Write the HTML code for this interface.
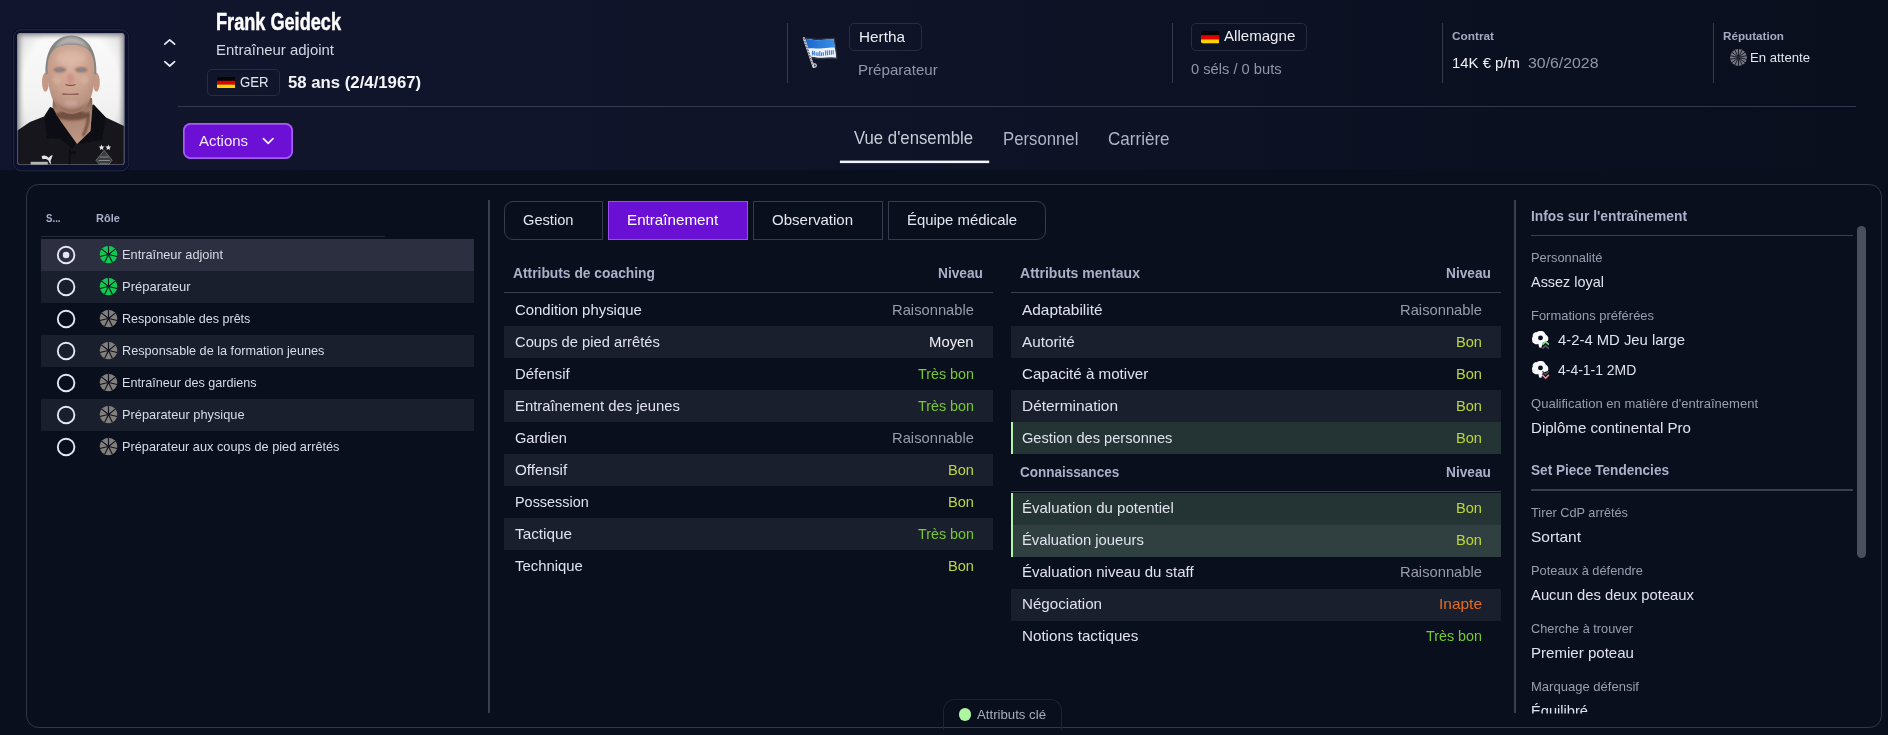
<!DOCTYPE html>
<html lang="fr"><head><meta charset="utf-8"><title>Frank Geideck</title>
<style>
html,body{margin:0;padding:0;background:#0a0f1e;}
body{width:1888px;height:735px;overflow:hidden;font-family:"Liberation Sans",sans-serif;}
#root{position:relative;width:1888px;height:735px;overflow:hidden;background:#0a0f1e;}
#root div,#root svg{position:absolute;box-sizing:border-box;}
.t{white-space:nowrap;line-height:20px;height:20px;}
.hdr{left:0;top:0;width:1888px;height:170px;background:linear-gradient(90deg,#11162e 0%,#0f1429 40%,#0b1021 80%,#0a0f1e 100%);}
.vd{width:1px;background:#363a4e;}
.chip{border:1px solid #272c41;border-radius:5px;}
.row{height:32px;}
.alt{background:#1a1f2e;}
.key{background:#243333;border-left:2px solid #b0f7a8;}
.key2{background:#304040;border-left:2px solid #b0f7a8;}
.hl{height:1px;background:#3a3f54;}
.tab{top:201px;height:39px;border:1px solid #363b50;background:#0a0f1e;}
#txt{left:0;top:0;width:1888px;height:735px;will-change:transform;}

</style></head>
<body>
<div id="root">
<div class="hdr"></div>
<!-- photo frame -->
<svg style="left:9px;top:25px" width="126" height="150" viewBox="9 25 126 150">
  <defs>
    <linearGradient id="pbg" x1="0" y1="0" x2="0" y2="1"><stop offset="0" stop-color="#fafafa"/><stop offset=".5" stop-color="#f3f3f3"/><stop offset="1" stop-color="#e2e2e2"/></linearGradient>
    <radialGradient id="skin" cx=".5" cy=".3" r=".8"><stop offset="0" stop-color="#d8b2a0"/><stop offset=".5" stop-color="#c9a18e"/><stop offset="1" stop-color="#a98272"/></radialGradient>
    <linearGradient id="neckg" x1="0" y1="0" x2="0" y2="1"><stop offset="0" stop-color="#7e5b4c"/><stop offset=".3" stop-color="#a98271"/><stop offset="1" stop-color="#c09985"/></linearGradient>
    <filter id="b05" x="-20%" y="-20%" width="140%" height="140%"><feGaussianBlur stdDeviation="0.55"/></filter>
    <filter id="b1" x="-20%" y="-20%" width="140%" height="140%"><feGaussianBlur stdDeviation="1.1"/></filter>
    <filter id="b2" x="-30%" y="-30%" width="160%" height="160%"><feGaussianBlur stdDeviation="2.2"/></filter>
    <radialGradient id="pvg" cx=".5" cy=".42" r=".72"><stop offset="0" stop-color="#888" stop-opacity="0"/><stop offset=".62" stop-color="#888" stop-opacity="0"/><stop offset="1" stop-color="#808080" stop-opacity=".42"/></radialGradient>
    <clipPath id="pc"><rect x="17.4" y="33.3" width="106.9" height="131.5" rx="2.6"/></clipPath>
  </defs>
  <rect x="12.6" y="28.9" width="117.1" height="143" rx="8.2" fill="none" stroke="#090c1c" stroke-width="1.4" opacity=".8"/><rect x="13.5" y="29.8" width="115.3" height="141" rx="7.5" fill="#0c1030" stroke="#252a3f" stroke-width="1"/>
  <g clip-path="url(#pc)">
    <rect x="17" y="33" width="108" height="132" fill="url(#pbg)"/>
    <rect x="17" y="33" width="108" height="132" fill="url(#pvg)"/>
    <rect x="15.4" y="31.3" width="110.9" height="135.5" rx="4" fill="none" stroke="#777" stroke-width="9" filter="url(#b2)" opacity=".75"/>
    <!-- shirt -->
    <path d="M16 131.5 L30 122 L44 116.5 L50 107 L70 114 L93.5 104.5 L106 117.5 L125 126.5 L126 166 L16 166 Z" fill="#15191a" filter="url(#b05)"/>
    <!-- neck -->
    <path d="M53 100 L92 98 L92.5 106 L90.5 131 L76.7 144.5 L64 128 L52.5 107 Z" fill="url(#neckg)" filter="url(#b05)"/>
    <path d="M88.5 112 C89 122 86 130 83 136" stroke="#4e362c" stroke-width="2.2" fill="none" filter="url(#b1)" opacity=".85"/>
    <ellipse cx="72" cy="115.5" rx="17" ry="5" fill="#684637" opacity=".85" filter="url(#b1)"/>
    <!-- collar -->
    <path d="M44.5 117.5 L50.5 107 L77 144 L72 149 L60 138 L47 139 Z" fill="#0e1112" filter="url(#b05)"/>
    <path d="M93.5 104.5 L106 118 L102 140 L84 143 L77 144.5 L91 131 Z" fill="#0e1112" filter="url(#b05)"/>
    <!-- ears -->
    <ellipse cx="45.4" cy="82.3" rx="3.4" ry="9.5" fill="#c49884" filter="url(#b05)"/>
    <ellipse cx="96.4" cy="82.3" rx="3.4" ry="9.5" fill="#c49884" filter="url(#b05)"/>
    <!-- hair back layer (sides + top) -->
    <path d="M45.6 74.5 C44.4 50 55 35.4 71.5 35.4 C87 35.4 97.5 50 96.4 74.5 L94 74.5 C94 66 92 58 90 54 C86 47 79 45.5 71 45.5 C63 45.5 56 47 52 54 C50 58 48 66 48 74.5 Z" fill="#858382" filter="url(#b05)"/>
    <!-- head -->
    <path d="M47.6 72 C47 55 52 44.8 71 44.8 C90 44.8 95 55 94.4 72 C94.4 84 93 95 88.5 103 C85 109.5 78.5 113.8 71.5 113.8 C64.5 113.8 58.5 109.5 54.5 103 C50 95 47.8 84 47.6 72 Z" fill="url(#skin)" filter="url(#b05)"/>
    <!-- light gray hair top -->
    <path d="M54 50 C58 41 64 37.2 71.5 37.2 C79 37.2 85 41 89 50 C84 44.6 78 43.6 71.5 43.6 C65 43.6 59 44.6 54 50 Z" fill="#b3b1b0" filter="url(#b1)"/>
    <ellipse cx="71" cy="58" rx="15" ry="7" fill="#e4c0af" opacity=".55" filter="url(#b2)"/>
    <!-- brows/eyes -->
    <ellipse cx="59.8" cy="69.8" rx="6.5" ry="2.7" fill="#8a685d" opacity=".75" filter="url(#b1)"/>
    <ellipse cx="81.2" cy="69.8" rx="6.5" ry="2.7" fill="#8a685d" opacity=".75" filter="url(#b1)"/>
    <ellipse cx="59.3" cy="70.7" rx="2.3" ry="1.3" fill="#6f8fa8" filter="url(#b05)"/>
    <ellipse cx="81.3" cy="70.7" rx="2.3" ry="1.3" fill="#6f8fa8" filter="url(#b05)"/>
    <!-- cheeks -->
    <ellipse cx="57" cy="80" rx="4.5" ry="4" fill="#dcb5a6" opacity=".5" filter="url(#b1)"/>
    <ellipse cx="84" cy="80" rx="4.5" ry="4" fill="#dcb5a6" opacity=".5" filter="url(#b1)"/>
    <!-- nose -->
    <ellipse cx="70.5" cy="79" rx="3.8" ry="6" fill="#cf8c82" opacity=".75" filter="url(#b1)"/>
    <path d="M65.5 84.5 Q70.5 86.6 75.5 84.5" stroke="#76503f" stroke-width="1.3" fill="none" filter="url(#b05)"/>
    <!-- mouth -->
    <path d="M62.5 94 Q70.5 95.6 78.5 94" stroke="#94615a" stroke-width="1.9" fill="none" filter="url(#b05)"/>
    <!-- jaw shading -->
    <path d="M52 96 C56 108 64 113.5 71.5 113.5 C79 113.5 87 108 91 96 C88 104 80 109 71.5 109 C63 109 56 104 52 96 Z" fill="#8b6656" opacity=".7" filter="url(#b1)"/>
    <ellipse cx="71" cy="103" rx="6.5" ry="3" fill="#d0aca4" opacity=".55" filter="url(#b1)"/>
    <!-- placket & button -->
    <path d="M70 149 L69.5 166" stroke="#0a0c0d" stroke-width="1.6"/>
    <ellipse cx="73.5" cy="152.5" rx="2.4" ry="1.3" fill="#0a0c0d"/>
    <!-- stars -->
    <g fill="#e6e6e6"><path id="st" d="M101.6 144.5 l0.85 1.9 2.05 .2 -1.55 1.4 .45 2 -1.8 -1.05 -1.8 1.05 .45 -2 -1.55 -1.4 2.05 -.2z"/><use href="#st" x="6.7"/></g>
    <!-- diamond badge -->
    <path d="M104.2 150.3 L112.2 160.3 L104.2 170 L96 160.3 Z" fill="#3b3f40" stroke="#6f7374" stroke-width=".9"/>
    <path d="M100 157 H108.5 M98.5 160.5 H110 M100 164 H108.5" stroke="#858989" stroke-width="1.1"/>
    <!-- puma -->
    <path d="M41.6 156.3 C43.5 154.8 46.5 155.5 48.5 157.8 C50 156.5 51 155.5 52.5 154.8 C52.3 157.5 51 159.5 50.5 161 L51.2 163.8 L49.8 163.5 L48.3 160.2 C46.5 158.5 44 158.8 42.5 159.3 Z" fill="#e4e4e4"/>
    <rect x="30.6" y="161.8" width="17.2" height="3.4" fill="#b4b4b4"/>
    <rect x="17.6" y="33.5" width="106.5" height="131.1" rx="2.6" fill="none" stroke="#7f828c" stroke-width=".7" opacity=".8"/>
  </g>
</svg>
<!-- arrows -->
<svg style="left:160px;top:34px" width="20" height="38" viewBox="160 34 20 38" fill="none" stroke="#eceef6" stroke-width="1.7" stroke-linecap="round" stroke-linejoin="round"><path d="M164.8 44.2 L169.7 39.9 L174.6 44.2"/><path d="M164.8 61.7 L169.7 66 L174.6 61.7"/></svg>
<!-- GER chip -->
<div class="chip" style="left:207px;top:69px;width:73px;height:27px"></div>
<svg style="left:216.9px;top:76.9px" width="18.4" height="11.4" viewBox="0 0 18.4 11.4"><clipPath id="fc217"><rect width="18.4" height="11.4" rx="1.6"/></clipPath><g clip-path="url(#fc217)"><rect width="18.4" height="3.9" fill="#050505"/><rect y="3.8" width="18.4" height="3.9" fill="#e10000"/><rect y="7.6" width="18.4" height="3.8" fill="#ffd200"/></g></svg>
<!-- header rule -->
<div class="hl" style="left:178px;top:106px;width:1678px;background:#343950"></div>
<!-- actions btn -->
<div style="left:183px;top:123px;width:110px;height:36px;border-radius:7.5px;background:#6c10d6;box-shadow:inset 0 0 0 1.7px #a560f0"></div>
<svg style="left:260px;top:134px" width="16" height="14" viewBox="260 134 16 14" fill="none" stroke="#f6efff" stroke-width="1.7" stroke-linecap="round" stroke-linejoin="round"><path d="M263.4 138.6 L268.2 143.4 L273 138.6"/></svg>
<!-- header dividers -->
<div class="vd" style="left:787px;top:23px;height:60px"></div>
<div class="vd" style="left:1172px;top:23px;height:60px"></div>
<div class="vd" style="left:1442px;top:23px;height:60px"></div>
<div class="vd" style="left:1713px;top:23px;height:60px"></div>
<!-- hertha logo -->
<svg style="left:798px;top:32px" width="44" height="42" viewBox="798 32 44 42">
  <defs><linearGradient id="hb" x1="0" y1="0" x2="1" y2="0"><stop offset="0" stop-color="#1866d0"/><stop offset="1" stop-color="#3a90e8"/></linearGradient></defs>
  <path d="M803.6 38.3 C809 37.6 812 39.6 818 39.4 C824 39.2 829 38.2 834.3 38.5 L836.9 58.4 C831 57.2 826 58.6 820 58.6 C816 58.6 813.5 57.2 810.6 57.6 Z" fill="#f2f5fa" stroke="#30343c" stroke-width="1.5" stroke-linejoin="round"/>
  <path d="M804.6 39.1 C809 38.6 812 40.4 818 40.2 C824 40 829 39.1 833.6 39.3 L834.9 47.8 C830 47 825 48.6 820 48.6 C815 48.6 812 47.6 807.6 48.6 Z" fill="url(#hb)"/>
  <path d="M808 49.4 C812 48.6 815 49.6 820 49.6 C825 49.6 830 48 835 48.8 L835.9 56.4 C831 55.6 826 57 820 57 C816 57 813.5 55.8 810.6 56.2 Z" fill="#eef3fb"/>
  <g stroke="#3d7fd6" stroke-width="1.1" fill="none"><path d="M812.5 50.8 V55.4 M814.3 51 V55.6 M812.5 53.2 H814.3 M816.2 52.2 V55.8 M818 52.2 V55.9 M819.8 51 V55.9 M821.6 52.3 V56 M823.4 52.2 V55.8 M825.6 50.6 V55.5 M827.4 50.4 V55.3 M829.4 50.2 V55 M831.4 50.2 V54.8 M833.2 50 V54.6"/></g>
  <path d="M803.8 38.2 L813.6 66.8" stroke="#d8dade" stroke-width="2.1" stroke-linecap="round"/>
  <path d="M803.8 38.2 L813.6 66.8" stroke="#2a2c33" stroke-width="1" stroke-dasharray="1.6 1.4"/>
  <circle cx="814.6" cy="65.6" r="1.7" fill="none" stroke="#d8dade" stroke-width="1.1"/>
</svg>
<div class="chip" style="left:849px;top:23px;width:73px;height:28px"></div>
<!-- allemagne chip -->
<div class="chip" style="left:1191px;top:23px;width:116px;height:28px"></div>
<svg style="left:1200.9px;top:31.3px" width="18.4" height="12.6" viewBox="0 0 18.4 12.6"><clipPath id="fc1201"><rect width="18.4" height="12.6" rx="2.4"/></clipPath><g clip-path="url(#fc1201)"><rect width="18.4" height="4.3" fill="#050505"/><rect y="4.2" width="18.4" height="4.3" fill="#e10000"/><rect y="8.4" width="18.4" height="4.2" fill="#ffd200"/></g></svg>
<!-- reputation icon -->
<svg style="left:1729.9px;top:49px" width="17" height="17" viewBox="-8.5 -8.5 17 17"><circle r="8.4" fill="#77787a"/><g stroke="#0e1224" stroke-width="0.9"><path d="M0 0 L0.00 -8.57"/><path d="M0 0 L3.72 -7.72"/><path d="M0 0 L6.70 -5.34"/><path d="M0 0 L8.35 -1.91"/><path d="M0 0 L8.35 1.91"/><path d="M0 0 L6.70 5.34"/><path d="M0 0 L3.72 7.72"/><path d="M0 0 L0.00 8.57"/><path d="M0 0 L-3.72 7.72"/><path d="M0 0 L-6.70 5.34"/><path d="M0 0 L-8.35 1.91"/><path d="M0 0 L-8.35 -1.91"/><path d="M0 0 L-6.70 -5.34"/><path d="M0 0 L-3.72 -7.72"/></g><circle r="1.6" fill="#23263a"/></svg>
<!-- tabs underline -->
<svg style="left:836px;top:158px" width="158" height="8" viewBox="836 158 158 8"><rect x="839.9" y="160.6" width="149.3" height="2.5" fill="#f4f5fa"/></svg>

<!-- main panel -->
<div style="left:26px;top:184px;width:1856px;height:544px;border:1px solid #32364a;border-radius:12.5px;background:#0a0f1e"></div>
<!-- left table -->
<div class="hl" style="left:41px;top:236px;width:344px;background:#242839"></div>
<div class="row" style="left:41px;top:239px;width:433px;background:#2b2f3f"></div>
<div class="row alt" style="left:41px;top:271px;width:433px"></div>
<div class="row alt" style="left:41px;top:335px;width:433px"></div>
<div class="row alt" style="left:41px;top:399px;width:433px"></div>
<svg style="left:0;top:0" width="500" height="480" viewBox="0 0 500 480">
  <defs>
    <g id="wheelg"><circle r="8.8" fill="#807f7c"/><g stroke="#10131f" stroke-width="1.15"><path d="M0 0 L0.00 -8.98"/><path d="M0 0 L7.02 -5.60"/><path d="M0 0 L8.75 2.00"/><path d="M0 0 L3.89 8.09"/><path d="M0 0 L-3.89 8.09"/><path d="M0 0 L-8.75 2.00"/><path d="M0 0 L-7.02 -5.60"/></g><circle r="1.1" fill="#10131f"/></g>
    <g id="wheelgr"><circle r="8.8" fill="#10ca54"/><g stroke="#111a22" stroke-width="1.15"><path d="M0 0 L0.00 -8.98"/><path d="M0 0 L7.02 -5.60"/><path d="M0 0 L8.75 2.00"/><path d="M0 0 L3.89 8.09"/><path d="M0 0 L-3.89 8.09"/><path d="M0 0 L-8.75 2.00"/><path d="M0 0 L-7.02 -5.60"/></g><circle r="1.1" fill="#111a22"/></g>
  </defs>
  <g fill="none" stroke="#e6e4f5" stroke-width="1.9">
    <circle cx="66.1" cy="255" r="8.3"/><circle cx="66.1" cy="287" r="8.3"/><circle cx="66.1" cy="319" r="8.3"/><circle cx="66.1" cy="351" r="8.3"/><circle cx="66.1" cy="383" r="8.3"/><circle cx="66.1" cy="415" r="8.3"/><circle cx="66.1" cy="447" r="8.3"/>
  </g>
  <circle cx="66.1" cy="255" r="3.3" fill="#e6e4f5"/>
  <use href="#wheelgr" x="108.5" y="254.5"/><use href="#wheelgr" x="108.5" y="286.5"/>
  <use href="#wheelg" x="108.5" y="318.5"/><use href="#wheelg" x="108.5" y="350.5"/><use href="#wheelg" x="108.5" y="382.5"/><use href="#wheelg" x="108.5" y="414.5"/><use href="#wheelg" x="108.5" y="446.5"/>
</svg>
<!-- vertical dividers -->
<div style="left:488px;top:200px;width:2px;height:513px;background:#3a3e50"></div>
<div style="left:1514px;top:200px;width:2px;height:513px;background:#3a3e50"></div>
<!-- tabs -->
<div class="tab" style="left:504px;width:99px;border-radius:9px 0 0 9px"></div>
<div class="tab" style="left:608px;width:140px;background:#6a10d4;border-color:#9a4cf0"></div>
<div class="tab" style="left:753px;width:130px"></div>
<div class="tab" style="left:888px;width:158px;border-radius:0 9px 9px 0"></div>
<!-- coaching rows -->
<div class="hl" style="left:504px;top:292px;width:489px"></div>
<div class="row alt" style="left:504px;top:326px;width:489px"></div>
<div class="row alt" style="left:504px;top:390px;width:489px"></div>
<div class="row alt" style="left:504px;top:454px;width:489px"></div>
<div class="row alt" style="left:504px;top:518px;width:489px"></div>
<!-- mental rows -->
<div class="hl" style="left:1011px;top:292px;width:490px"></div>
<div class="row alt" style="left:1011px;top:326px;width:490px"></div>
<div class="row alt" style="left:1011px;top:390px;width:490px"></div>
<div class="row key" style="left:1011px;top:422px;width:490px"></div>
<div class="hl" style="left:1011px;top:491px;width:490px"></div>
<div class="row key" style="left:1011px;top:493px;width:490px"></div>
<div class="row key2" style="left:1011px;top:525px;width:490px"></div>
<div class="row alt" style="left:1011px;top:589px;width:490px"></div>
<!-- right panel -->
<div class="hl" style="left:1531px;top:235px;width:322px"></div>
<div class="hl" style="left:1531px;top:489px;width:322px;height:2px"></div>
<div style="left:1857px;top:226px;width:9px;height:332px;border-radius:4.5px;background:#4b4f5b"></div>
<svg style="left:1530px;top:329px" width="22" height="52" viewBox="1530 329 22 52">
  <g id="fi"><path d="M1533.5 333.6 C1534.5 331.8 1536.2 332.2 1537 331.9 C1538.5 330.6 1541.5 330.8 1542.7 331.2 C1544.5 331.6 1545 333.4 1545.7 334.5 C1547.5 335.6 1548.6 337.6 1548.3 338.8 C1548.4 340.5 1547.6 341.2 1546 341.6 L1542.7 342.7 C1542.2 344.5 1541.8 346.5 1541.4 347.7 L1539.2 347.6 C1539 346.3 1538.6 345 1538.3 344 C1536.5 344.6 1534.6 344.2 1534.2 343.5 C1532.8 343 1531.9 341.6 1532.3 340.4 C1531.6 338.8 1532.2 337.4 1532.8 336.4 C1532.5 335.3 1532.8 334.3 1533.5 333.6 Z" fill="#fafafc"/><circle cx="1540.5" cy="337.9" r="2.45" fill="#0a0f1e"/></g>
  <path d="M1542.4 344.6 L1545.6 341.6 L1548.8 344.6" fill="none" stroke="#8ee88f" stroke-width="1.5"/>
  <path d="M1542.4 348.6 L1545.6 345.6 L1548.8 348.6" fill="none" stroke="#50535f" stroke-width="1.5"/>
  <use href="#fi" y="30"/>
  <path d="M1542.4 371.2 L1545.6 374.2 L1548.8 371.2" fill="none" stroke="#50535f" stroke-width="1.5"/>
  <path d="M1542.4 374.9 L1545.6 378.2 L1548.8 374.9" fill="none" stroke="#f28b8b" stroke-width="1.6"/>
</svg>
<div style="left:1520px;top:713px;width:330px;height:14px;background:#0a0f1e"></div>
<!-- key attr tab -->
<div style="left:943px;top:699px;width:119px;height:31px;border:1px solid #1d2236;border-bottom:none;border-radius:12px 12px 0 0;"></div>
<div style="left:958.8px;top:708.2px;width:12.4px;height:12.4px;border-radius:6.2px;background:#aef5a1"></div>

<div id="txt">
<div class="t" style="font-size:24px;color:#ffffff;font-weight:700;left:215.70px;top:12px;transform:scaleX(0.7556);transform-origin:0 0;-webkit-text-stroke:0.45px #fff;">Frank Geideck</div>
<div class="t" style="font-size:15.52px;color:#d4d7e2;left:216.40px;top:40px;transform:scaleX(0.9634);transform-origin:0 0;">Entraîneur adjoint</div>
<div class="t" style="font-size:15.52px;color:#e4e6ee;left:240.00px;top:72px;transform:scaleX(0.8506);transform-origin:0 0;">GER</div>
<div class="t" style="font-size:15.6px;color:#f4f5f9;font-weight:700;left:288.30px;top:73px;transform:scaleX(1.0737);transform-origin:0 0;">58 ans (2/4/1967)</div>
<div class="t" style="font-size:15.52px;color:#f3eaff;left:198.60px;top:131px;transform:scaleX(0.9628);transform-origin:0 0;">Actions</div>
<div class="t" style="font-size:15.52px;color:#eceef4;left:859.10px;top:27px;transform:scaleX(0.9876);transform-origin:0 0;">Hertha</div>
<div class="t" style="font-size:15.52px;color:#9296a8;left:858.40px;top:60px;transform:scaleX(0.9739);transform-origin:0 0;">Préparateur</div>
<div class="t" style="font-size:15.52px;color:#eceef4;left:1224.00px;top:26px;transform:scaleX(0.9723);transform-origin:0 0;">Allemagne</div>
<div class="t" style="font-size:15.52px;color:#9296a8;left:1191.30px;top:59px;transform:scaleX(0.9464);transform-origin:0 0;">0 séls / 0 buts</div>
<div class="t" style="font-size:11px;color:#a6a9c2;font-weight:700;left:1451.60px;top:26px;transform:scaleX(1.0739);transform-origin:0 0;">Contrat</div>
<div class="t" style="font-size:15.52px;color:#f0f1f6;left:1452.00px;top:53px;transform:scaleX(0.9599);transform-origin:0 0;">14K € p/m</div>
<div class="t" style="font-size:15.52px;color:#9296a8;left:1527.50px;top:53px;transform:scaleX(1.0213);transform-origin:0 0;">30/6/2028</div>
<div class="t" style="font-size:11px;color:#a6a9c2;font-weight:700;left:1722.60px;top:26px;transform:scaleX(1.0617);transform-origin:0 0;">Réputation</div>
<div class="t" style="font-size:13.45px;color:#e4e6ee;left:1749.60px;top:48px;transform:scaleX(0.9793);transform-origin:0 0;">En attente</div>
<div class="t" style="font-size:17.59px;color:#c9ccd8;left:854.00px;top:128px;transform:scaleX(0.9531);transform-origin:0 0;">Vue d'ensemble</div>
<div class="t" style="font-size:17.59px;color:#b0b4c4;left:1003.10px;top:129px;transform:scaleX(0.9525);transform-origin:0 0;">Personnel</div>
<div class="t" style="font-size:17.59px;color:#b0b4c4;left:1108.00px;top:129px;transform:scaleX(0.9701);transform-origin:0 0;">Carrière</div>
<div class="t" style="font-size:11px;color:#adb0c8;font-weight:700;left:45.50px;top:208px;transform:scaleX(0.8780);transform-origin:0 0;">S...</div>
<div class="t" style="font-size:11px;color:#adb0c8;font-weight:700;left:95.70px;top:208px;transform:scaleX(0.9982);transform-origin:0 0;">Rôle</div>
<div class="t" style="font-size:13.45px;color:#d9dce8;left:122.40px;top:245px;transform:scaleX(0.9521);transform-origin:0 0;">Entraîneur adjoint</div>
<div class="t" style="font-size:13.45px;color:#d9dce8;left:122.40px;top:277px;transform:scaleX(0.9666);transform-origin:0 0;">Préparateur</div>
<div class="t" style="font-size:13.45px;color:#d9dce8;left:122.40px;top:309px;transform:scaleX(0.9341);transform-origin:0 0;">Responsable des prêts</div>
<div class="t" style="font-size:13.45px;color:#d9dce8;left:122.40px;top:341px;transform:scaleX(0.9441);transform-origin:0 0;">Responsable de la formation jeunes</div>
<div class="t" style="font-size:13.45px;color:#d9dce8;left:122.40px;top:373px;transform:scaleX(0.9384);transform-origin:0 0;">Entraîneur des gardiens</div>
<div class="t" style="font-size:13.45px;color:#d9dce8;left:122.40px;top:405px;transform:scaleX(0.9542);transform-origin:0 0;">Préparateur physique</div>
<div class="t" style="font-size:13.45px;color:#d9dce8;left:122.40px;top:437px;transform:scaleX(0.9484);transform-origin:0 0;">Préparateur aux coups de pied arrêtés</div>
<div class="t" style="font-size:15.52px;color:#e4e6ee;left:522.80px;top:210px;transform:scaleX(0.9442);transform-origin:0 0;">Gestion</div>
<div class="t" style="font-size:15.52px;color:#ffffff;left:627.30px;top:210px;transform:scaleX(0.9790);transform-origin:0 0;">Entraînement</div>
<div class="t" style="font-size:15.52px;color:#e4e6ee;left:772.00px;top:210px;transform:scaleX(0.9694);transform-origin:0 0;">Observation</div>
<div class="t" style="font-size:15.52px;color:#e4e6ee;left:907.00px;top:210px;transform:scaleX(0.9597);transform-origin:0 0;">Équipe médicale</div>
<div class="t" style="font-size:14px;color:#adb0c8;font-weight:700;left:512.60px;top:263px;transform:scaleX(0.9868);transform-origin:0 0;">Attributs de coaching</div>
<div class="t" style="font-size:14px;color:#adb0c8;font-weight:700;left:938.00px;top:263px;transform:scaleX(0.9799);transform-origin:0 0;">Niveau</div>
<div class="t" style="font-size:15.52px;color:#e0e2ed;left:515.00px;top:300px;transform:scaleX(0.9607);transform-origin:0 0;">Condition physique</div>
<div class="t" style="font-size:15.52px;color:#999ba8;left:892.00px;top:300px;transform:scaleX(0.9506);transform-origin:0 0;">Raisonnable</div>
<div class="t" style="font-size:15.52px;color:#e0e2ed;left:515.00px;top:332px;transform:scaleX(0.9484);transform-origin:0 0;">Coups de pied arrêtés</div>
<div class="t" style="font-size:15.52px;color:#f0f1f5;left:929.40px;top:332px;transform:scaleX(0.9575);transform-origin:0 0;">Moyen</div>
<div class="t" style="font-size:15.52px;color:#e0e2ed;left:515.00px;top:364px;transform:scaleX(0.9592);transform-origin:0 0;">Défensif</div>
<div class="t" style="font-size:15.52px;color:#78c82f;left:918.00px;top:364px;transform:scaleX(0.9232);transform-origin:0 0;">Très bon</div>
<div class="t" style="font-size:15.52px;color:#e0e2ed;left:515.00px;top:396px;transform:scaleX(0.9559);transform-origin:0 0;">Entraînement des jeunes</div>
<div class="t" style="font-size:15.52px;color:#78c82f;left:918.00px;top:396px;transform:scaleX(0.9232);transform-origin:0 0;">Très bon</div>
<div class="t" style="font-size:15.52px;color:#e0e2ed;left:515.00px;top:428px;transform:scaleX(0.9420);transform-origin:0 0;">Gardien</div>
<div class="t" style="font-size:15.52px;color:#999ba8;left:892.00px;top:428px;transform:scaleX(0.9506);transform-origin:0 0;">Raisonnable</div>
<div class="t" style="font-size:15.52px;color:#e0e2ed;left:515.00px;top:460px;transform:scaleX(0.9814);transform-origin:0 0;">Offensif</div>
<div class="t" style="font-size:15.52px;color:#bcd733;left:948.00px;top:460px;transform:scaleX(0.9417);transform-origin:0 0;">Bon</div>
<div class="t" style="font-size:15.52px;color:#e0e2ed;left:515.00px;top:492px;transform:scaleX(0.9289);transform-origin:0 0;">Possession</div>
<div class="t" style="font-size:15.52px;color:#bcd733;left:948.00px;top:492px;transform:scaleX(0.9417);transform-origin:0 0;">Bon</div>
<div class="t" style="font-size:15.52px;color:#e0e2ed;left:515.00px;top:524px;transform:scaleX(0.9862);transform-origin:0 0;">Tactique</div>
<div class="t" style="font-size:15.52px;color:#78c82f;left:918.00px;top:524px;transform:scaleX(0.9232);transform-origin:0 0;">Très bon</div>
<div class="t" style="font-size:15.52px;color:#e0e2ed;left:515.00px;top:556px;transform:scaleX(0.9583);transform-origin:0 0;">Technique</div>
<div class="t" style="font-size:15.52px;color:#bcd733;left:948.00px;top:556px;transform:scaleX(0.9417);transform-origin:0 0;">Bon</div>
<div class="t" style="font-size:14px;color:#adb0c8;font-weight:700;left:1019.60px;top:263px;transform:scaleX(1.0017);transform-origin:0 0;">Attributs mentaux</div>
<div class="t" style="font-size:14px;color:#adb0c8;font-weight:700;left:1446.00px;top:263px;transform:scaleX(0.9799);transform-origin:0 0;">Niveau</div>
<div class="t" style="font-size:15.52px;color:#e0e2ed;left:1022.00px;top:300px;transform:scaleX(0.9927);transform-origin:0 0;">Adaptabilité</div>
<div class="t" style="font-size:15.52px;color:#999ba8;left:1400.00px;top:300px;transform:scaleX(0.9506);transform-origin:0 0;">Raisonnable</div>
<div class="t" style="font-size:15.52px;color:#e0e2ed;left:1022.00px;top:332px;transform:scaleX(0.9872);transform-origin:0 0;">Autorité</div>
<div class="t" style="font-size:15.52px;color:#bcd733;left:1456.00px;top:332px;transform:scaleX(0.9417);transform-origin:0 0;">Bon</div>
<div class="t" style="font-size:15.52px;color:#e0e2ed;left:1022.00px;top:364px;transform:scaleX(0.9756);transform-origin:0 0;">Capacité à motiver</div>
<div class="t" style="font-size:15.52px;color:#bcd733;left:1456.00px;top:364px;transform:scaleX(0.9417);transform-origin:0 0;">Bon</div>
<div class="t" style="font-size:15.52px;color:#e0e2ed;left:1022.00px;top:396px;transform:scaleX(0.9939);transform-origin:0 0;">Détermination</div>
<div class="t" style="font-size:15.52px;color:#bcd733;left:1456.00px;top:396px;transform:scaleX(0.9417);transform-origin:0 0;">Bon</div>
<div class="t" style="font-size:15.52px;color:#e0e2ed;left:1022.00px;top:428px;transform:scaleX(0.9425);transform-origin:0 0;">Gestion des personnes</div>
<div class="t" style="font-size:15.52px;color:#bcd733;left:1456.00px;top:428px;transform:scaleX(0.9417);transform-origin:0 0;">Bon</div>
<div class="t" style="font-size:14px;color:#adb0c8;font-weight:700;left:1019.60px;top:462px;transform:scaleX(0.9657);transform-origin:0 0;">Connaissances</div>
<div class="t" style="font-size:14px;color:#adb0c8;font-weight:700;left:1446.00px;top:462px;transform:scaleX(0.9799);transform-origin:0 0;">Niveau</div>
<div class="t" style="font-size:15.52px;color:#e0e2ed;left:1022.00px;top:498px;transform:scaleX(0.9669);transform-origin:0 0;">Évaluation du potentiel</div>
<div class="t" style="font-size:15.52px;color:#bcd733;left:1456.00px;top:498px;transform:scaleX(0.9417);transform-origin:0 0;">Bon</div>
<div class="t" style="font-size:15.52px;color:#e0e2ed;left:1022.00px;top:530px;transform:scaleX(0.9541);transform-origin:0 0;">Évaluation joueurs</div>
<div class="t" style="font-size:15.52px;color:#bcd733;left:1456.00px;top:530px;transform:scaleX(0.9417);transform-origin:0 0;">Bon</div>
<div class="t" style="font-size:15.52px;color:#e0e2ed;left:1022.00px;top:562px;transform:scaleX(0.9672);transform-origin:0 0;">Évaluation niveau du staff</div>
<div class="t" style="font-size:15.52px;color:#999ba8;left:1400.00px;top:562px;transform:scaleX(0.9506);transform-origin:0 0;">Raisonnable</div>
<div class="t" style="font-size:15.52px;color:#e0e2ed;left:1022.00px;top:594px;transform:scaleX(0.9762);transform-origin:0 0;">Négociation</div>
<div class="t" style="font-size:15.52px;color:#e36c22;left:1439.00px;top:594px;transform:scaleX(0.9967);transform-origin:0 0;">Inapte</div>
<div class="t" style="font-size:15.52px;color:#e0e2ed;left:1022.00px;top:626px;transform:scaleX(0.9779);transform-origin:0 0;">Notions tactiques</div>
<div class="t" style="font-size:15.52px;color:#78c82f;left:1426.00px;top:626px;transform:scaleX(0.9232);transform-origin:0 0;">Très bon</div>
<div class="t" style="font-size:14px;color:#adb0c8;font-weight:700;left:1530.60px;top:206px;transform:scaleX(0.9865);transform-origin:0 0;">Infos sur l'entraînement</div>
<div class="t" style="font-size:13.45px;color:#9a9eb0;left:1530.60px;top:248px;transform:scaleX(0.9558);transform-origin:0 0;">Personnalité</div>
<div class="t" style="font-size:15.52px;color:#e0e2ed;left:1530.60px;top:272px;transform:scaleX(0.9301);transform-origin:0 0;">Assez loyal</div>
<div class="t" style="font-size:13.45px;color:#9a9eb0;left:1530.60px;top:306px;transform:scaleX(0.9631);transform-origin:0 0;">Formations préférées</div>
<div class="t" style="font-size:15.52px;color:#e0e2ed;left:1557.60px;top:330px;transform:scaleX(0.9562);transform-origin:0 0;">4-2-4 MD Jeu large</div>
<div class="t" style="font-size:15.52px;color:#e0e2ed;left:1557.60px;top:360px;transform:scaleX(0.8990);transform-origin:0 0;">4-4-1-1 2MD</div>
<div class="t" style="font-size:13.45px;color:#9a9eb0;left:1530.60px;top:394px;transform:scaleX(0.9696);transform-origin:0 0;">Qualification en matière d'entraînement</div>
<div class="t" style="font-size:15.52px;color:#e0e2ed;left:1530.60px;top:418px;transform:scaleX(0.9713);transform-origin:0 0;">Diplôme continental Pro</div>
<div class="t" style="font-size:14px;color:#adb0c8;font-weight:700;left:1530.60px;top:460px;transform:scaleX(0.9709);transform-origin:0 0;">Set Piece Tendencies</div>
<div class="t" style="font-size:13.45px;color:#9a9eb0;left:1530.60px;top:503px;transform:scaleX(0.9481);transform-origin:0 0;">Tirer CdP arrêtés</div>
<div class="t" style="font-size:15.52px;color:#e0e2ed;left:1530.60px;top:527px;transform:scaleX(0.9994);transform-origin:0 0;">Sortant</div>
<div class="t" style="font-size:13.45px;color:#9a9eb0;left:1530.60px;top:561px;transform:scaleX(0.9548);transform-origin:0 0;">Poteaux à défendre</div>
<div class="t" style="font-size:15.52px;color:#e0e2ed;left:1530.60px;top:585px;transform:scaleX(0.9543);transform-origin:0 0;">Aucun des deux poteaux</div>
<div class="t" style="font-size:13.45px;color:#9a9eb0;left:1530.60px;top:619px;transform:scaleX(0.9483);transform-origin:0 0;">Cherche à trouver</div>
<div class="t" style="font-size:15.52px;color:#e0e2ed;left:1530.60px;top:643px;transform:scaleX(0.9708);transform-origin:0 0;">Premier poteau</div>
<div class="t" style="font-size:13.45px;color:#9a9eb0;left:1530.60px;top:677px;transform:scaleX(0.9702);transform-origin:0 0;">Marquage défensif</div>
<div class="t" style="font-size:15.52px;color:#e0e2ed;left:1530.60px;top:701px;transform:scaleX(0.9441);transform-origin:0 0;clip-path:inset(0 0 7.4px 0);">Équilibré</div>
<div class="t" style="font-size:13.45px;color:#a9adbd;left:976.60px;top:705px;transform:scaleX(0.9829);transform-origin:0 0;">Attributs clé</div>
</div>
</div>
</body></html>
